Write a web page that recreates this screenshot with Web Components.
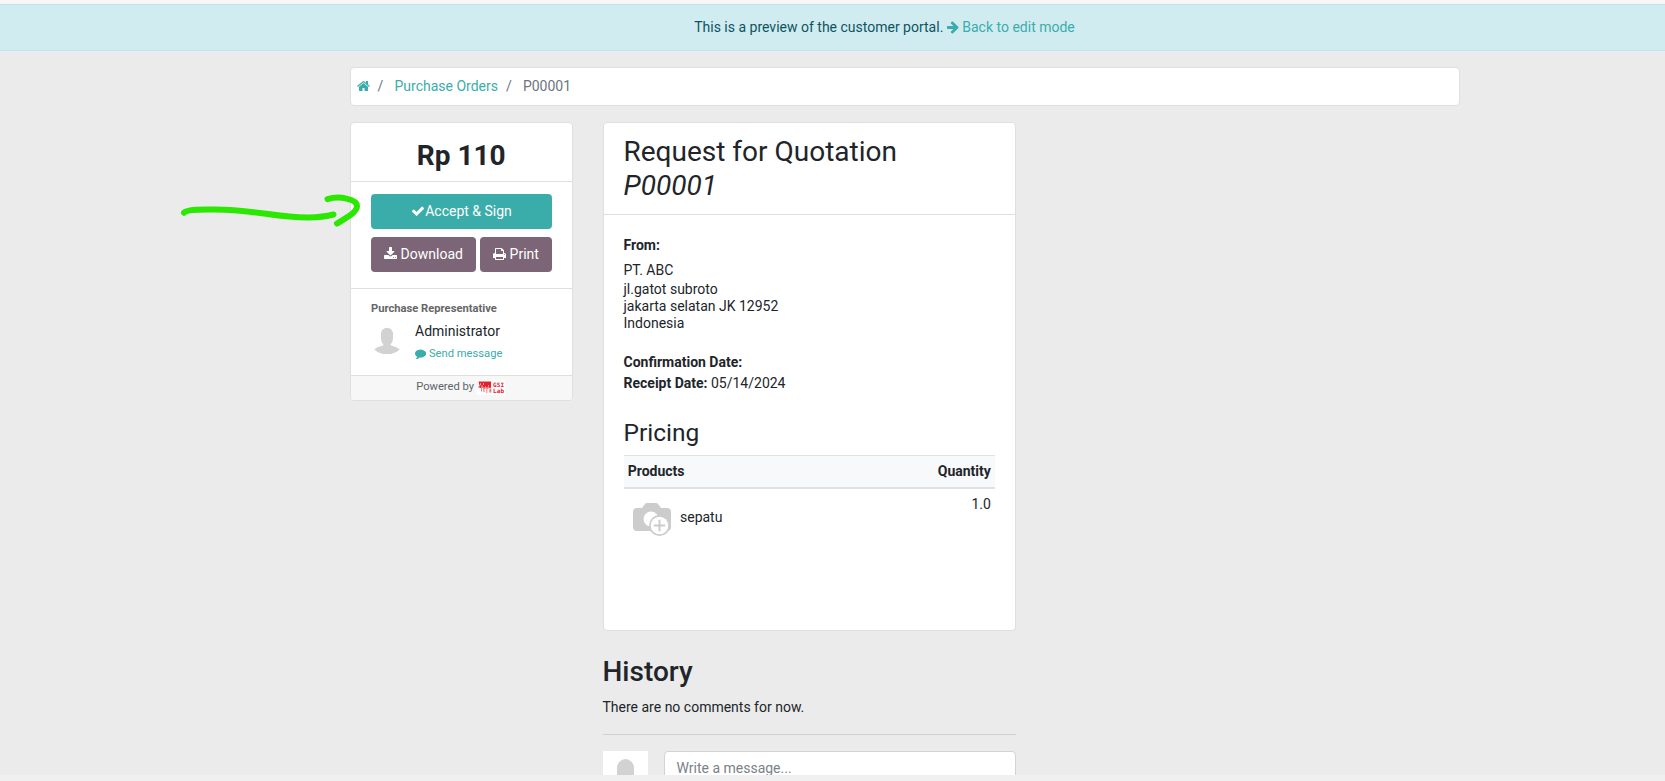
<!DOCTYPE html>
<html lang="en">
<head>
<meta charset="utf-8">
<title>Purchase Order P00001</title>
<style>
html,body{margin:0;height:100%;overflow:hidden}
body{background:#f0f0f0;font:14px/21px Roboto,"Liberation Sans",sans-serif;color:#212529}
</style>
</head>
<body>
<portal-page></portal-page>
<script>
const define = (name, html, init) => customElements.define(name, class extends HTMLElement {
  constructor() {
    super();
    const t = document.createElement('template');
    t.innerHTML = html;
    this.attachShadow({mode: 'open'}).append(t.content.cloneNode(true));
  }
  connectedCallback() { if (init) init(this); }
});

/* Glyphs on a 1792-unit grid: [left edge, advance width, path] */
const GLYPHS = {
  home: [64, 1664, 'M1472 992v480q0 26-19 45t-45 19h-384v-384h-256v384h-384q-26 0-45-19t-19-45v-480q0-1 .5-3t.5-3l575-474 575 474q1 2 1 6zm223-69l-62 74q-8 9-21 11h-3q-13 0-21-7l-692-577-692 577q-12 8-24 7-13-2-21-11l-62-74q-8-10-7-23.5t11-21.5l719-599q32-26 76-26t76 26l244 204v-195q0-14 9-23t23-9h192q14 0 23 9t9 23v408l219 182q10 8 11 21.5t-7 23.5z'],
  check: [0, 1792, 'M1671 566q0 40-28 68l-724 724-136 136q-28 28-68 28t-68-28l-136-136-362-362q-28-28-28-68t28-68l136-136q28-28 68-28t68 28l294 295 656-657q28-28 68-28t68 28l136 136q28 28 28 68z'],
  download: [64, 1664, 'M1344 1344q0-26-19-45t-45-19-45 19-19 45 19 45 45 19 45-19 19-45zm256 0q0-26-19-45t-45-19-45 19-19 45 19 45 45 19 45-19 19-45zm128-224v320q0 40-28 68t-68 28h-1472q-40 0-68-28t-28-68v-320q0-40 28-68t68-28h465l135 136q58 56 136 56t136-56l136-136h464q40 0 68 28t28 68zm-325-569q17 41-14 70l-448 448q-18 19-45 19t-45-19l-448-448q-31-29-14-70 17-39 59-39h256v-448q0-26 19-45t45-19h256q26 0 45 19t19 45v448h256q42 0 59 39z'],
  print: [64, 1664, 'M448 1536h896v-256h-896v256zm0-640h896v-384h-160q-40 0-68-28t-28-68v-160h-640v640zm1152 64q0-26-19-45t-45-19-45 19-19 45 19 45 45 19 45-19 19-45zm128 0v416q0 13-9.5 22.5t-22.5 9.5h-224v160q0 40-28 68t-68 28h-960q-40 0-68-28t-28-68v-160h-224q-13 0-22.5-9.5t-9.5-22.5v-416q0-79 56.5-135.5t135.5-56.5h64v-544q0-40 28-68t68-28h672q40 0 88 20t76 48l152 152q28 28 48 76t20 88v256h64q79 0 135.5 56.5t56.5 135.5z'],
  comment: [0, 1792, 'M1792 896q0 174-120 321.5t-326 233-450 85.5q-70 0-145-8-198 175-460 242-49 14-114 22-17 2-30.5-9t-17.5-29v-1q-3-4-.5-12t2-10 4.5-9.5l6-9 7-8.5 8-9q7-8 31-34.5t34.5-38 31-39.5 32.5-51 27-59 26-76q-157-89-247.5-220t-90.5-281q0-130 71-248.5t191-204.5 286-136.5 348-50.5q244 0 450 85.5t326 233 120 321.5z'],
  arrow: [128, 1536, 'M1600 960q0 54-37 91l-651 651q-39 37-91 37-51 0-90-37l-75-75q-38-38-38-91t38-91l293-293h-704q-52 0-84.5-37.5t-32.5-90.5v-128q0-53 32.5-90.5t84.5-37.5h704l-293-294q-38-36-38-90t38-90l75-75q38-38 90-38 53 0 91 38l651 651q37 35 37 90z']
};
define('ui-icon', `<style>:host{display:inline-block;vertical-align:-2px;line-height:0}svg{display:block;height:1em;fill:currentColor}</style><svg><path/></svg>`, el => {
  const [x, w, d] = GLYPHS[el.getAttribute('name')];
  const svg = el.shadowRoot.querySelector('svg');
  svg.setAttribute('viewBox', `${x} 0 ${w} 1792`);
  svg.style.width = w / 1792 + 'em';
  svg.firstElementChild.setAttribute('d', d);
});

define('ui-button', `<style>
:host{display:block;box-sizing:border-box;height:35px;padding:7px 0;border-radius:4px;background:#7c6576;color:#fff;text-align:center;white-space:nowrap}
:host([primary]){background:#3aadaa}
</style><slot></slot>`);

define('user-avatar', `<style>:host{display:block}svg{display:block;width:100%;height:100%}</style>
<svg viewBox="0 0 45 45"><rect width="45" height="45" fill="#fff"/><path fill="#d2d2d2" d="M14 17a8.500 9 0 0 1 17 0v6q0 5-3.500 8.500q0 1.500 2 2q7 1.500 11 5q-7 7-18 7t-18-7q4-3.500 11-5q2-.5 2-2q-3.500-3.500-3.500-8.500z"/></svg>`);

define('portal-banner', `<style>
:host{display:block;box-sizing:border-box;height:47px;border:solid #bee5eb;border-width:1px 0;background:#d1ecf1;color:#0c5460;padding:12px 0 12px 104px;text-align:center}
a{color:#3aadaa}
</style>This is a preview of the customer portal. <a><ui-icon name="arrow"></ui-icon> Back to edit mode</a>`);

define('portal-breadcrumb', `<style>
:host{display:flex;box-sizing:border-box;height:39px;border:1px solid #dfdfdf;border-radius:4px;background:#fff;padding:8px 5.500px;color:#6c757d}
a{color:#3aadaa}i{font-style:normal;padding:0 11.200px 0 8px}
</style><a><ui-icon name="home"></ui-icon></a><i>/</i><a>Purchase Orders</a><i>/</i><span>P00001</span>`);

define('company-logo', `<style>:host{display:inline-block;vertical-align:-5px}svg{display:block}</style>
<svg width="28" height="15"><rect width="28" height="15" fill="#fff"/><g fill="#e3202c"><path d="M1.500 1.500h12.500v6h-2v-2h-1v1.500h-2v-1h-1v1h-2v-1.200h-2v2h-1z"/><path d="M1.500 6h12.500v2h-12.500zM4 7.500h1v4h-1zM6 8h2.500v1h-1v3h-1zM9.300 8h2v1h-1v4h-1zM12.300 8.500h2v4h-2z" opacity=".6"/><path d="M3 3.200h1v2h-1zM6 3h1v2h-1z" fill="#fff" opacity=".6"/></g><g fill="#e3202c" font-family="DejaVu Sans Mono,monospace" font-size="6" font-weight="bold"><text x="16" y="6.800" textLength="11">GSI</text><text x="16" y="13" textLength="11">Lab</text></g></svg>`);

define('portal-sidebar', `<style>
:host{display:block;box-sizing:border-box;width:222.500px;border:1px solid #dfdfdf;border-radius:4px;background:#fff;overflow:hidden}
section{box-sizing:border-box;border-bottom:1px solid #dfdfdf;padding:0 20px}
h2{margin:0;font-size:28px;line-height:34px;text-align:center;font-weight:700}
.amount{height:59px;padding-top:16px}
.actions{height:107px;padding-top:12px;display:grid;grid-template-columns:105px 72px;column-gap:4px;row-gap:8px;align-content:start}
.actions [primary]{grid-column:span 2}
.rep{height:87px;padding-top:11px;font-size:11.200px;color:#666}
.rep b{display:block;line-height:17px}
.person{display:grid;grid-template-columns:32px 1fr;column-gap:12px;margin-top:4px}
user-avatar{width:32px;height:32px;margin-top:1px}
.person div{font-size:14px;color:#212529}
.person a{display:block;font-size:11.200px;color:#3aadaa;line-height:21px;padding-top:1px}
footer{height:24px;background:#f7f7f7;color:#5f6468;font-size:11.200px;line-height:22px;text-align:center;padding-right:1.500px}
</style>
<section class="amount"><h2>Rp 110</h2></section>
<section class="actions"><ui-button primary><ui-icon name="check"></ui-icon>Accept &amp; Sign</ui-button><ui-button><ui-icon name="download"></ui-icon> Download</ui-button><ui-button><ui-icon name="print"></ui-icon> Print</ui-button></section>
<section class="rep"><b>Purchase Representative</b><div class="person"><user-avatar></user-avatar><div>Administrator<a><ui-icon name="comment"></ui-icon> Send message</a></div></div></section>
<footer>Powered by <company-logo></company-logo></footer>`);

define('product-image', `<style>:host{display:block;width:40px;height:36px}svg{display:block}</style>
<svg width="40" height="36"><path fill="#ccc" d="M1 9q0-4 4-4h5l3-4q.7-1 2-1h9q1.300 0 2 1l3 4h6q4 0 4 4v15q0 4-4 4h-30q-4 0-4-4z"/><circle cx="19" cy="16" r="7.500" fill="#fff"/><circle cx="27.500" cy="22.500" r="10.500" fill="#ccc"/><circle cx="27.500" cy="22.500" r="8.800" fill="#fff"/><path d="M27.500 16.800v11.400M21.800 22.500h11.400" stroke="#ccc" stroke-width="2"/></svg>`);

define('pricing-table', `<style>
:host{display:block}
.row{display:flex;justify-content:space-between;padding:0 4.200px}
.head{box-sizing:border-box;height:34px;border-top:1px solid #dee2e6;border-bottom:2px solid #dee2e6;background:#f8f9fa;font-weight:700;line-height:31px}
.item{display:flex;gap:8px;padding:14px 0 0 4.300px}
.item span{padding-top:4px}
.qty{padding-top:5px}
</style>
<div class="row head"><span>Products</span><span>Quantity</span></div>
<div class="row"><div class="item"><product-image></product-image><span>sepatu</span></div><span class="qty">1.0</span></div>`);

define('order-card', `<style>
:host{display:block;box-sizing:border-box;width:413.500px;height:509px;border:1px solid #dfdfdf;border-radius:4px;background:#fff}
header{box-sizing:border-box;height:92px;border-bottom:1px solid #dfdfdf;padding:12px 20px}
h2,h3{margin:0;font-weight:400}
h2{font-size:28px;line-height:33.600px}
h3{font-size:24.500px;line-height:29px;margin-bottom:8px}
em{display:block}
main{padding:20px}
address{font-style:normal;line-height:17px;margin-top:4px}
address span{display:block}
address span:first-child{line-height:21px}
.dates{margin:20px 0 24px}
</style>
<header><h2>Request for Quotation <em>P00001</em></h2></header>
<main><b>From:</b>
<address><span>PT. ABC</span><span>jl.gatot subroto</span><span>jakarta selatan JK 12952</span><span>Indonesia</span></address>
<div class="dates"><b>Confirmation Date:</b><br><b>Receipt Date:</b> 05/14/2024</div>
<h3>Pricing</h3><pricing-table></pricing-table></main>`);

define('portal-history', `<style>
:host{display:block;width:413.500px;margin-top:24px}
h2{margin:0 0 8px;font-size:28px;line-height:34px;font-weight:500}
.none{padding-bottom:16px;border-bottom:1px solid #d0d1d3}
.composer{display:flex;gap:16px;margin-top:16px}
user-avatar{width:45px;height:45px;flex:none}
.box{flex:1;box-sizing:border-box;height:80px;border:1px solid #ced4da;border-radius:4px;background:#fff;padding:6px 12px;color:#7b8288}
</style>
<h2>History</h2><div class="none">There are no comments for now.</div>
<div class="composer"><user-avatar></user-avatar><div class="box">Write a message...</div></div>`);

/* Freehand marker that lies over the page, pointing at the sign button */
define('marker-arrow', `<style>:host{position:absolute;left:170px;top:180px;pointer-events:none}svg{display:block}</style>
<svg width="200" height="60" fill="none" stroke="#2be800" stroke-width="6" stroke-linecap="round" stroke-linejoin="round"><path d="M14 32.700C17 29 33 29.300 45 29.500C86 29.500 104 37.500 138 37.500Q153 37.300 163.500 34.500M157.500 19.200C169 15.500 187 19 187 26C187 32 178 37 167 43.500"/></svg>`);

define('portal-page', `<style>
:host{display:block;box-sizing:border-box;position:relative;height:775px;overflow:hidden;background:#ebebeb;border-top:4px solid #f7f7f7}
.container{width:1110px;margin:16px 0 0 350px}
.columns{display:flex;gap:30px;align-items:flex-start;margin-top:16px}
marker-arrow{margin-top:-4px}
</style>
<portal-banner></portal-banner>
<div class="container"><portal-breadcrumb></portal-breadcrumb>
<div class="columns"><portal-sidebar></portal-sidebar><div><order-card></order-card><portal-history></portal-history></div></div></div>
<marker-arrow></marker-arrow>`);
</script>
</body>
</html>
